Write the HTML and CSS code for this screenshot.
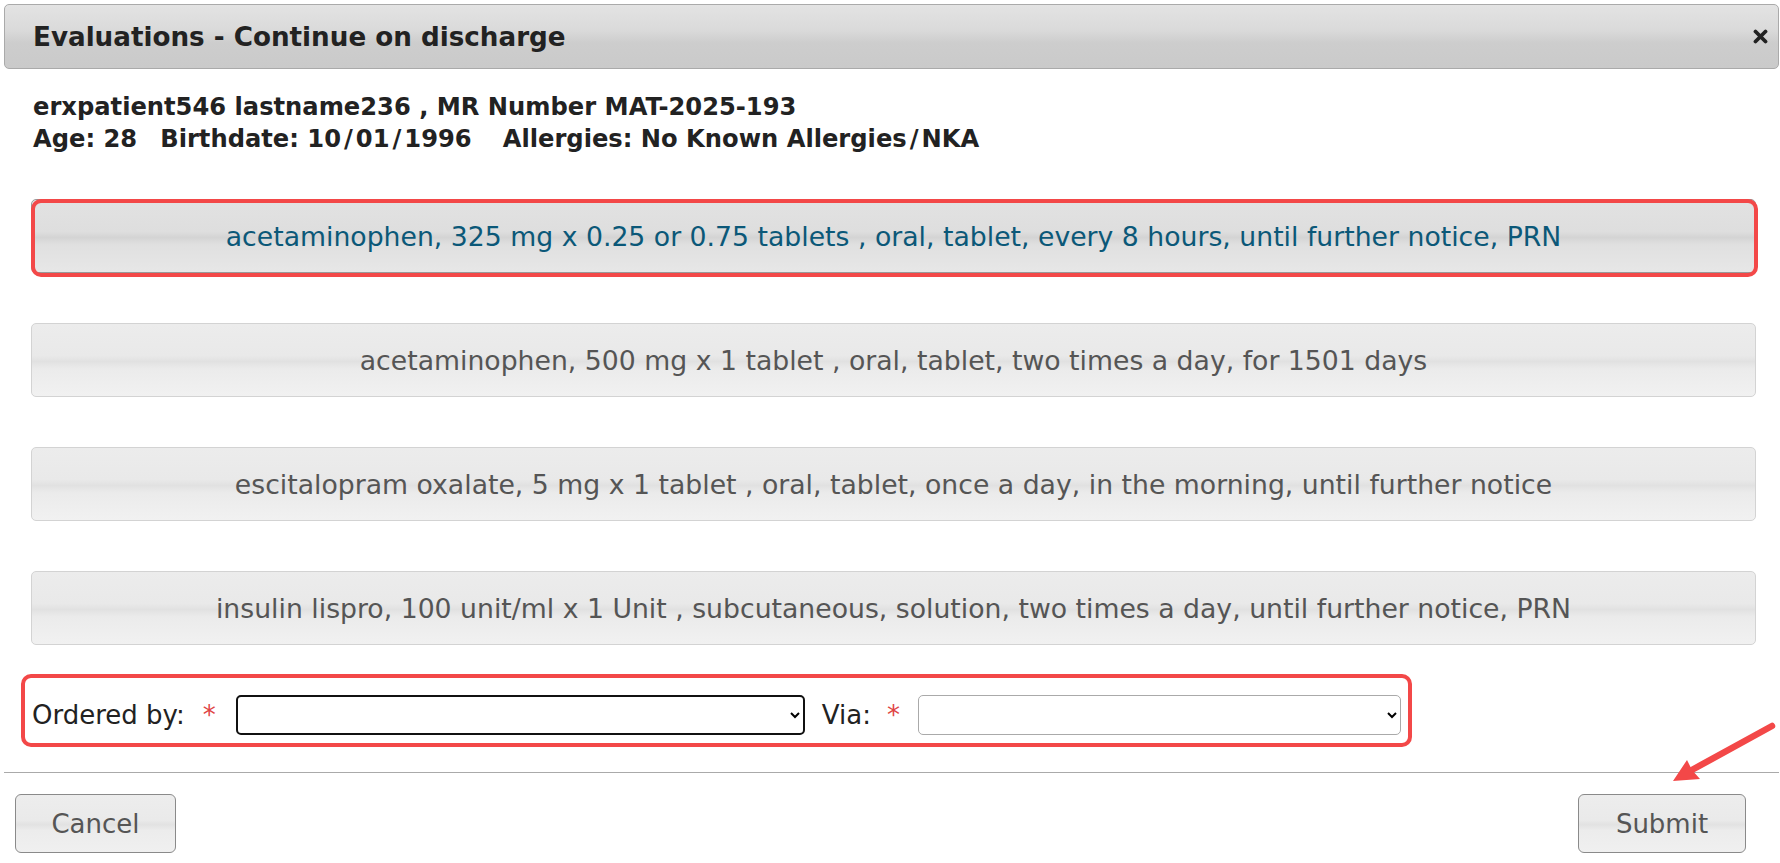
FILE: index.html
```html
<!DOCTYPE html>
<html lang="en">
<head>
    <meta charset="UTF-8">
    <title>Evaluations - Continue on discharge</title>
    <link rel="stylesheet" href="styles.css">
</head>
<body>
    <div class="dialog">
        <div class="dialog-header">
            <span class="dialog-title">Evaluations - Continue on discharge</span>
            <button class="close-btn" title="Close">
                <svg width="15" height="15" viewBox="0 0 15 15">
                    <path d="M2.5 2.5 L12.5 12.5 M12.5 2.5 L2.5 12.5" stroke="#222" stroke-width="3.8" stroke-linecap="round"/>
                </svg>
            </button>
        </div>

        <div class="dialog-content">
            <div class="patient-info">
                <div>erxpatient546 lastname236 , MR Number MAT-2025-193</div>
                <div><span class="info-item">Age: 28</span><span class="info-item">Birthdate: 10<span class="sl">/</span>01<span class="sl">/</span>1996</span><span class="info-item">Allergies: No Known Allergies<span class="sl">/</span>NKA</span></div>
            </div>

            <div class="med-list">
                <div class="med-item">
                    <button class="med-btn active">acetaminophen, 325 mg x 0.25 or 0.75 tablets , oral, tablet, every 8 hours, until further notice, PRN</button>
                    <div class="mark mark-med"></div>
                </div>
                <div class="med-item">
                    <button class="med-btn">acetaminophen, 500 mg x 1 tablet , oral, tablet, two times a day, for 1501 days</button>
                </div>
                <div class="med-item">
                    <button class="med-btn">escitalopram oxalate, 5 mg x 1 tablet , oral, tablet, once a day, in the morning, until further notice</button>
                </div>
                <div class="med-item">
                    <button class="med-btn">insulin lispro, 100 unit/ml x 1 Unit , subcutaneous, solution, two times a day, until further notice, PRN</button>
                </div>
            </div>

            <div class="order-row">
                <label class="field-label">Ordered by:<span class="req">*</span></label>
                <select class="select select-ordered"><option></option></select>
                <label class="field-label">Via:<span class="req req-via">*</span></label>
                <select class="select select-via"><option></option></select>
                <div class="mark mark-row"></div>
            </div>
        </div>

        <div class="dialog-footer">
            <button class="btn">Cancel</button>
            <button class="btn">Submit</button>
        </div>

        <!-- annotation arrow pointing at Submit -->
        <svg class="arrow" width="125" height="75" viewBox="0 0 125 75">
            <line x1="112" y1="11" x2="30" y2="56" stroke="#f34848" stroke-width="6.5" stroke-linecap="round"/>
            <path d="M13 66 L27 45 L32 55 L40 64 Z" fill="#f34848"/>
        </svg>
    </div>
</body>
</html>
```

FILE: styles.css
```css
* {
    margin: 0;
    padding: 0;
    box-sizing: border-box;
}

body {
    font-family: 'DejaVu Sans', Verdana, sans-serif;
    background-color: #fff;
    color: #222;
}

.dialog {
    position: relative;
    padding: 4px 1px 0 4px;
}

.dialog-header {
    display: flex;
    align-items: center;
    justify-content: space-between;
    height: 65px;
    padding: 0 10px 0 28px;
    border: 1px solid #aaa;
    border-radius: 5px;
    background: linear-gradient(#e3e3e3 0%, #dadada 40%, #cdcdcd 60%, #cacaca 100%);
}

.dialog-title {
    font-size: 26.2px;
    font-weight: bold;
    color: #222;
}

.close-btn {
    display: flex;
    border: none;
    background: none;
    cursor: pointer;
}

.dialog-content {
    padding: 22px 23px 37px 27px;
}

.patient-info {
    font-size: 24.2px;
    font-weight: bold;
    line-height: 32px;
    padding-left: 2px;
    color: #222;
}

.info-item {
    margin-right: 23px;
}

.info-item:nth-child(2) {
    margin-right: 31px;
}

/* slashes are wider in the original face */
.sl {
    margin: 0 3px;
}

.med-list {
    display: flex;
    flex-direction: column;
    gap: 50px;
    margin-top: 44px;
}

.med-item {
    position: relative;
}

.med-btn {
    display: block;
    width: 100%;
    height: 74px;
    font-family: 'DejaVu Sans', Verdana, sans-serif;
    font-size: 26.7px;
    color: #555;
    border: 1px solid #d3d3d3;
    border-radius: 5px;
    background: linear-gradient(#ececec 0%, #e9e9e9 44%, #e1e1e1 52%, #ebebeb 62%, #f1f1f1 100%);
    cursor: pointer;
}

.med-btn.active {
    color: #0b5878;
    border-color: #999;
    background: linear-gradient(#e2e2e2 0%, #dedede 44%, #d4d4d4 52%, #e0e0e0 62%, #e7e7e7 100%);
}

/* red annotation frames */
.mark {
    position: absolute;
    border: 4px solid #f34848;
    border-radius: 10px;
    pointer-events: none;
}

.mark-med {
    top: 0;
    left: 0;
    right: -2px;
    bottom: -4px;
}

.order-row {
    position: relative;
    display: flex;
    align-items: center;
    height: 40px;
    margin-top: 50px;
    padding-left: 1px;
}

.mark-row {
    top: -21px;
    bottom: -12px;
    left: -10px;
    width: 1391px;
}

.field-label {
    font-size: 26px;
    color: #222;
    white-space: nowrap;
}

.req {
    margin-left: 18px;
    color: #e04444;
}

.req-via {
    margin-left: 16px;
}

.select {
    height: 40px;
    font-family: 'DejaVu Sans', Verdana, sans-serif;
    font-size: 20px;
    background-color: #fff;
    border-radius: 5px;
}

.select-ordered {
    width: 569px;
    margin: 0 17px 0 20px;
    border: 2px solid #111;
}

.select-via {
    width: 483px;
    margin-left: 18px;
    border: 1px solid #aaa;
}

.dialog-footer {
    display: flex;
    justify-content: space-between;
    border-top: 1px solid #aaa;
    padding: 21px 33px 11px 11px;
}

.btn {
    width: 161px;
    height: 59px;
    font-family: 'DejaVu Sans', Verdana, sans-serif;
    font-size: 26px;
    color: #555;
    border: 1px solid #8a8a8a;
    border-radius: 6px;
    background: linear-gradient(#ededed 0%, #eaeaea 44%, #e2e2e2 52%, #ececec 62%, #f0f0f0 100%);
    cursor: pointer;
}

.btn:last-child {
    width: 168px;
}

.arrow {
    position: absolute;
    left: 1660px;
    top: 715px;
}
```
